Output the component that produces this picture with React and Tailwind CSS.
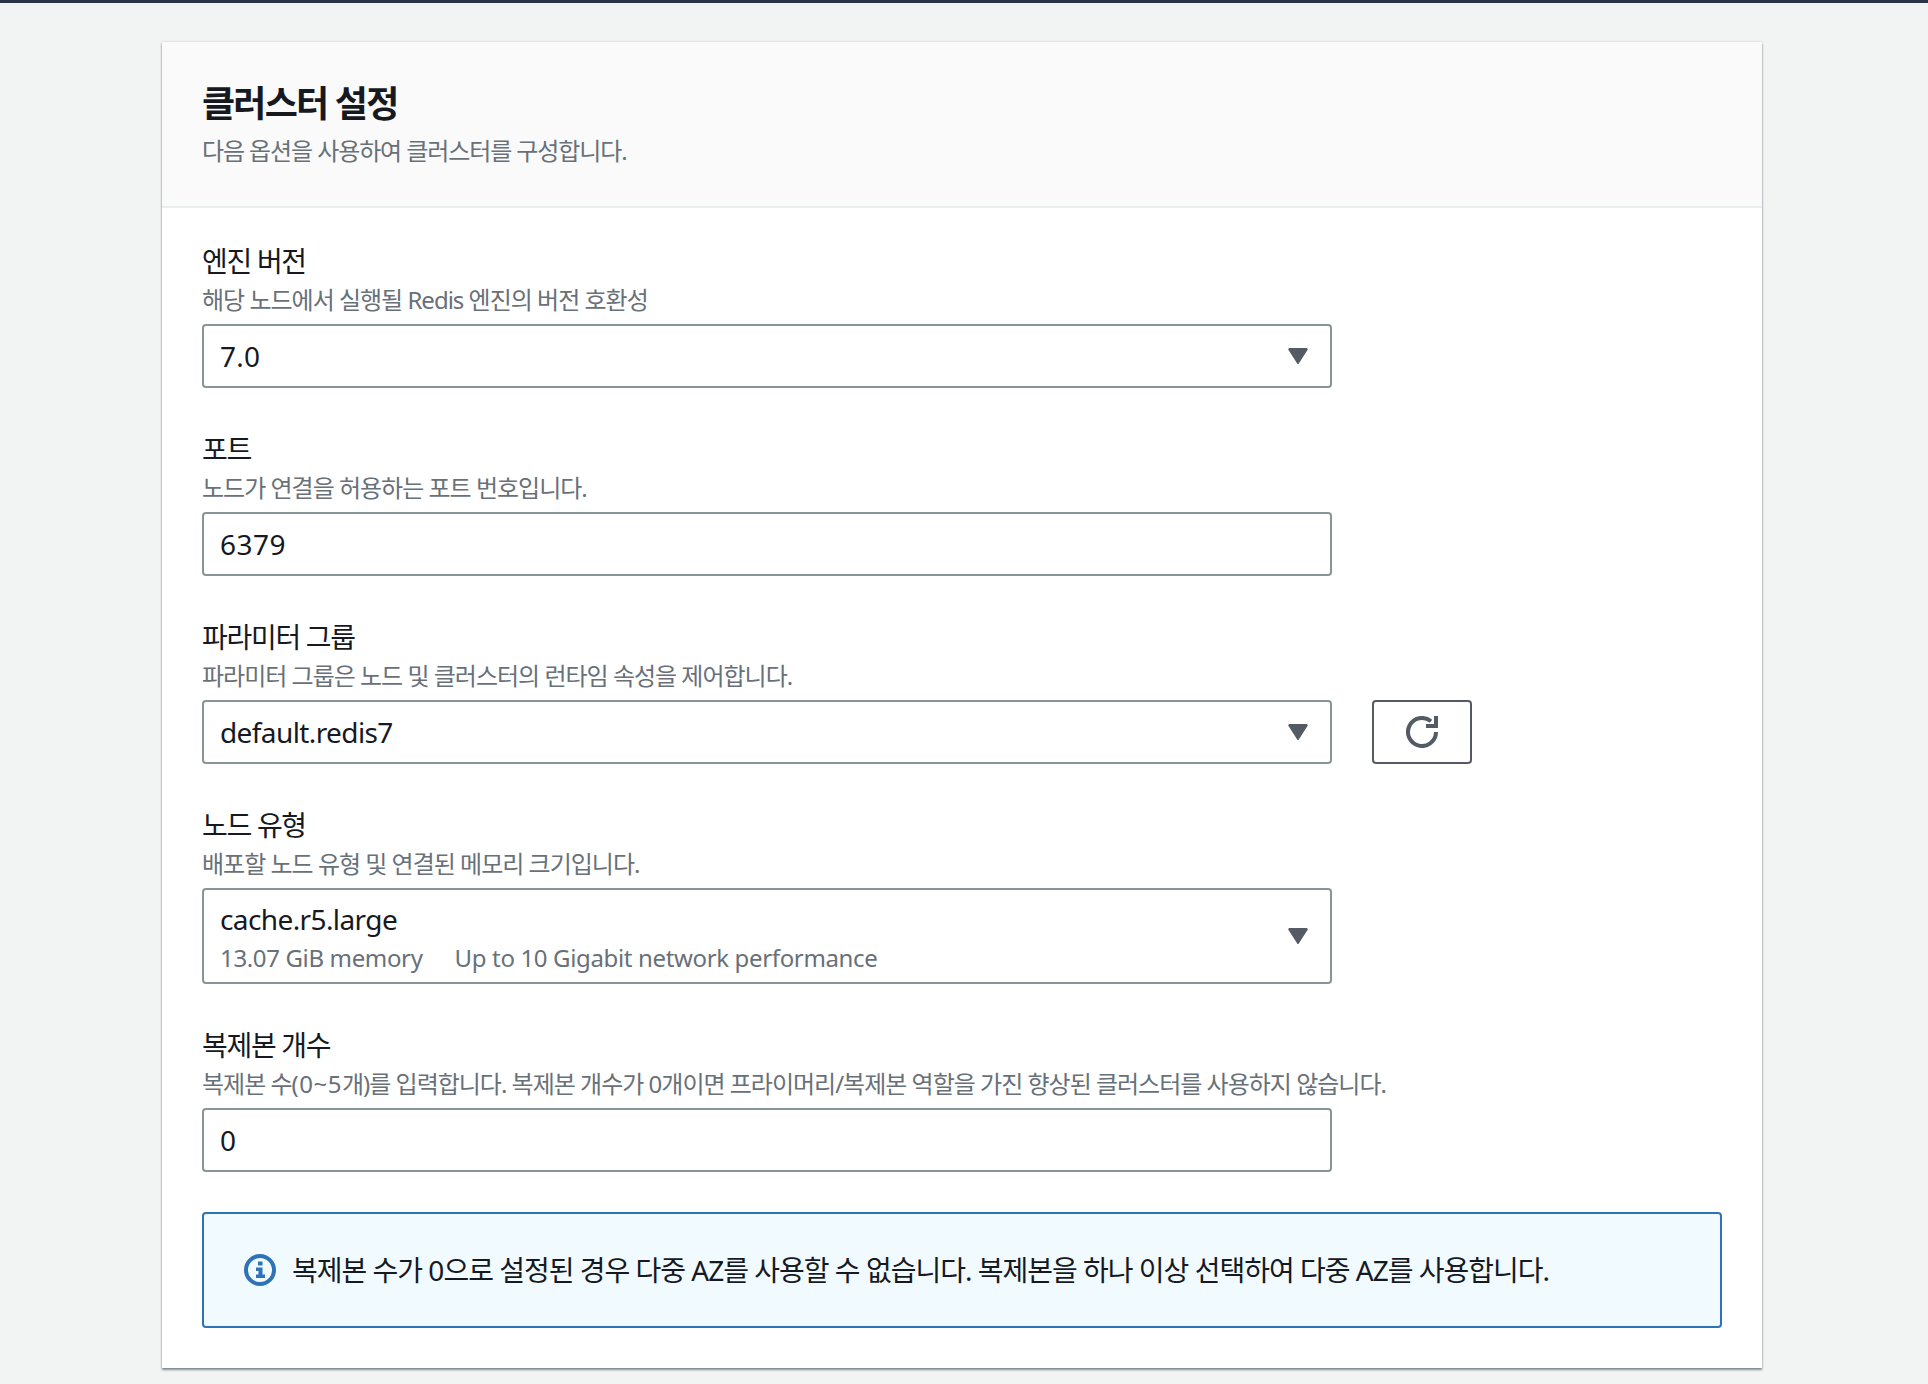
import React from "react";

const CaretIcon = () => (
  <svg width="20" height="16" viewBox="0 0 20 16" className="shrink-0">
    <path d="M1.5 0h17a1.2 1.2 0 0 1 1 1.9L10.8 15.4a1 1 0 0 1-1.6 0L.5 1.9A1.2 1.2 0 0 1 1.5 0z" fill="#545b64" />
  </svg>
);

const RefreshIcon = () => (
  <svg width="32" height="32" viewBox="0 0 32 32" fill="none">
    <path d="M30 16A14 14 0 1 1 25 5.3" stroke="#545b64" strokeWidth="4" />
    <path d="M28 0h4v12H20V8h8z" fill="#545b64" />
  </svg>
);

const InfoIcon = () => (
  <svg width="32" height="32" viewBox="0 0 32 32" className="shrink-0">
    <circle cx="16" cy="16" r="14" fill="none" stroke="#2e73b8" strokeWidth="4" />
    <rect x="14" y="7.5" width="4.5" height="4" fill="#2e73b8" />
    <path d="M12 13.5h6.5v7H21v3.5H12v-3.5h2.5V17H12z" fill="#2e73b8" />
  </svg>
);

const Box = ({ children, select, className = "h-16" }) => (
  <div className={`flex items-center justify-between rounded border-2 border-[#879596] bg-white pl-[16px] pr-[22px] ${className}`}>
    <div className="min-w-0">{children}</div>
    {select && <CaretIcon />}
  </div>
);

const Field = ({ label, desc, children }) => (
  <div className="flex flex-col">
    <label className="text-[28px] leading-[42px] tracking-[-1.3px] text-[#16191f]">{label}</label>
    <p className="mb-[6px] text-[24px] leading-[36px] tracking-[-1px] text-[#687078]">{desc}</p>
    {children}
  </div>
);

const Value = ({ children, tracking = "tracking-[-0.6px]" }) => (
  <span className={`text-[28px] leading-[40px] text-[#16191f] ${tracking}`}>{children}</span>
);

export default function App() {
  return (
    <div className="min-h-[1384px] border-t-[3px] border-[#2a3645] bg-[#f2f3f3] pt-[39px] font-['Noto_Sans','Noto_Sans_CJK_KR',sans-serif]">
      <section className="ml-[162px] w-[1600px] bg-white shadow-[0_2px_2px_rgba(0,28,36,0.45),0_0_2px_rgba(0,28,36,0.2)]">
        <header className="h-[166px] border-b-2 border-[#eaeded] bg-[#fafafa] px-[40px] pt-[35px]">
          <h2 className="text-[36px] font-bold leading-[54px] tracking-[-1.8px] text-[#16191f]">클러스터 설정</h2>
          <p className="text-[24px] leading-[39px] tracking-[-1.1px] text-[#687078]">다음 옵션을 사용하여 클러스터를 구성합니다.</p>
        </header>
        <div className="flex flex-col gap-[40px] px-[40px] pb-[40px] pt-[32px]">
          <Field label="엔진 버전" desc="해당 노드에서 실행될 Redis 엔진의 버전 호환성">
            <div className="w-[1130px]">
              <Box select><Value tracking="tracking-[0.3px]">7.0</Value></Box>
            </div>
          </Field>
          <Field label="포트" desc="노드가 연결을 허용하는 포트 번호입니다.">
            <div className="w-[1130px]">
              <Box><Value tracking="tracking-[0.5px]">6379</Value></Box>
            </div>
          </Field>
          <Field label="파라미터 그룹" desc="파라미터 그룹은 노드 및 클러스터의 런타임 속성을 제어합니다.">
            <div className="flex gap-[40px]">
              <div className="w-[1130px]">
                <Box select><Value>default.redis7</Value></Box>
              </div>
              <button className="flex h-16 w-[100px] items-center justify-center rounded border-2 border-[#545b64] bg-white">
                <RefreshIcon />
              </button>
            </div>
          </Field>
          <Field label="노드 유형" desc="배포할 노드 유형 및 연결된 메모리 크기입니다.">
            <div className="w-[1130px]">
              <Box select className="h-24">
                <div className="leading-[48px]"><Value>cache.r5.large</Value></div>
                <div className="flex gap-[32px] pb-[6px] text-[24px] leading-[20px] tracking-[-0.35px] text-[#687078]">
                  <span>13.07 GiB memory</span>
                  <span>Up to 10 Gigabit network performance</span>
                </div>
              </Box>
            </div>
          </Field>
          <Field
            label="복제본 개수"
            desc={
              <>
                복제본 수<span className="tracking-[0.5px]">(0~5</span>개)를 입력합니다. 복제본 개수가 0개이면 프라이머리/복제본 역할을 가진 향상된 클러스터를 사용하지 않습니다.
              </>
            }
          >
            <div className="w-[1130px]">
              <Box><Value tracking="tracking-[0.3px]">0</Value></Box>
            </div>
          </Field>
          <div className="flex h-[116px] items-center gap-[16px] rounded border-2 border-[#2e73b8] bg-[#f1faff] pl-[40px]">
            <InfoIcon />
            <span className="text-[28px] leading-[40px] tracking-[-1px] text-[#16191f]">
              복제본 수가 0으로 설정된 경우 다중 AZ를 사용할 수 없습니다. 복제본을 하나 이상 선택하여 다중 AZ를 사용합니다.
            </span>
          </div>
        </div>
      </section>
    </div>
  );
}
